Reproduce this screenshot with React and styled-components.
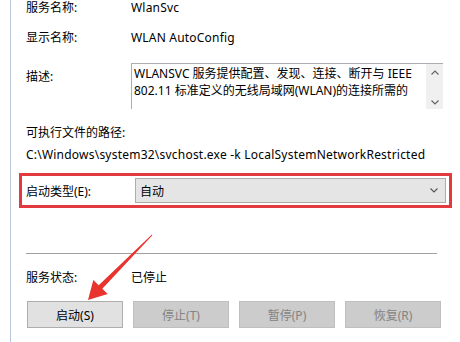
import React from 'react'
import styled, {createGlobalStyle} from 'styled-components'

const GlobalStyle = createGlobalStyle`
  html, body {
    margin: 0;
    background: #fff;
  }
  body {
    font-family: "Noto Sans", "Noto Sans CJK SC", sans-serif;
    font-size: 12px;
    color: #000;
  }
`

const Page = styled.div`
  position: relative;
  width: 460px;
  height: 342px;
  overflow: hidden;
`

const Panel = styled.div`
  margin-left: 10px;
  height: 100%;
  border-left: 1px solid #b9c6dc;
  padding: 0 0 0 15px;
  box-sizing: border-box;
  display: flex;
  flex-direction: column;
`

const Row = styled.div`
  display: grid;
  grid-template-columns: 105px 1fr;
  align-items: ${props => props.$top ? 'start' : 'center'};
  height: ${props => props.$h || 18}px;
  margin-top: ${props => props.$mt || 0}px;
  line-height: 18px;
`

const Label = styled.div`
  white-space: nowrap;
  padding-top: ${props => props.$pt || 0}px;
`

const Value = styled.div`
  white-space: nowrap;
  letter-spacing: ${props => props.$ls || 0}px;
`

const Block = styled.div`
  line-height: 18px;
  margin-top: ${props => props.$mt || 0}px;
  letter-spacing: ${props => props.$ls || 0}px;
  white-space: nowrap;
`

const TextBox = styled.div`
  display: flex;
  width: 312px;
  height: 46px;
  border-top: 1px solid #abadb3;
  border-left: 1px solid #abadb3;
  box-sizing: border-box;
`

const TextBody = styled.div`
  flex: 1;
  padding: 1px 0 0 2px;
  line-height: 17px;
  white-space: nowrap;
  overflow: hidden;
`

const ScrollBar = styled.div`
  width: 17px;
  background: #f0f0f0;
  display: flex;
  flex-direction: column;
  justify-content: space-between;
  align-items: center;
  padding: 6px 0 4px;
  box-sizing: border-box;
`

const Highlight = styled.div`
  margin: 9px 0 0 -7px;
  width: 433px;
  height: 35px;
  border: 3px solid #e23a3f;
  box-sizing: border-box;
  display: grid;
  grid-template-columns: 109px 1fr;
  align-items: center;
  padding: 0 3px 0 4px;
`

const Combo = styled.div`
  height: 25px;
  background: #e5e5e5;
  border: 1px solid #acacac;
  box-sizing: border-box;
  display: flex;
  align-items: center;
  justify-content: space-between;
  padding: 0 7px 0 4px;
`

const Separator = styled.hr`
  margin: 45px 0 0 0;
  width: 411px;
  border: none;
  border-top: 1px solid #a0a0a0;
  height: 0;
`

const ButtonBar = styled.div`
  display: flex;
  gap: 10px;
  margin: 14px 0 0 1px;
`

const Button = styled.div`
  width: 96px;
  height: 27px;
  box-sizing: border-box;
  display: flex;
  align-items: center;
  justify-content: center;
  background: ${props => props.$disabled ? '#cccccc' : '#e1e1e1'};
  border: 1px solid ${props => props.$disabled ? '#bfbfbf' : '#adadad'};
  color: ${props => props.$disabled ? '#838383' : '#000'};
`

const ArrowLayer = styled.svg`
  position: absolute;
  left: 0;
  top: 0;
  pointer-events: none;
`

const Chevron = ({up, size = 8, color = '#606060'}) => (
  <svg width={size} height={5} viewBox="0 0 8 5">
    <path d={up ? 'M0.5 4.5 L4 1 L7.5 4.5' : 'M0.5 0.5 L4 4 L7.5 0.5'}
      fill="none" stroke={color} strokeWidth="1.1" />
  </svg>
)

export default function App() {
  return (
    <Page>
      <GlobalStyle />
      <Panel>
        <Row $mt={-1}>
          <Label>服务名称:</Label>
          <Value $ls={0.2}>WlanSvc</Value>
        </Row>
        <Row $mt={12}>
          <Label>显示名称:</Label>
          <Value $ls={0.2}>WLAN AutoConfig</Value>
        </Row>
        <Row $mt={16} $h={46} $top>
          <Label $pt={5}>描述:</Label>
          <TextBox>
            <TextBody>
              WLANSVC 服务提供配置、发现、连接、断开与 IEEE<br />
              802.11 标准定义的无线局域网(WLAN)的连接所需的
            </TextBody>
            <ScrollBar>
              <Chevron up />
              <Chevron />
            </ScrollBar>
          </TextBox>
        </Row>
        <Block $mt={15}>可执行文件的路径:</Block>
        <Block $mt={4} $ls={0.22}>C:\Windows\system32\svchost.exe -k LocalSystemNetworkRestricted</Block>
        <Highlight>
          <Label>启动类型(E):</Label>
          <Combo>
            <span>自动</span>
            <Chevron size={8} color="#555" />
          </Combo>
        </Highlight>
        <Separator />
        <Row $mt={15}>
          <Label>服务状态:</Label>
          <Value>已停止</Value>
        </Row>
        <ButtonBar>
          <Button>启动(S)</Button>
          <Button $disabled>停止(T)</Button>
          <Button $disabled>暂停(P)</Button>
          <Button $disabled>恢复(R)</Button>
        </ButtonBar>
      </Panel>
      <ArrowLayer width="460" height="342" viewBox="0 0 460 342">
        <polygon
          points="151.6,234.7 152.4,235.3 102.3,288.7 107.7,294 88,300 93.3,280 98.7,285.3"
          fill="#e8332f" />
      </ArrowLayer>
    </Page>
  )
}
